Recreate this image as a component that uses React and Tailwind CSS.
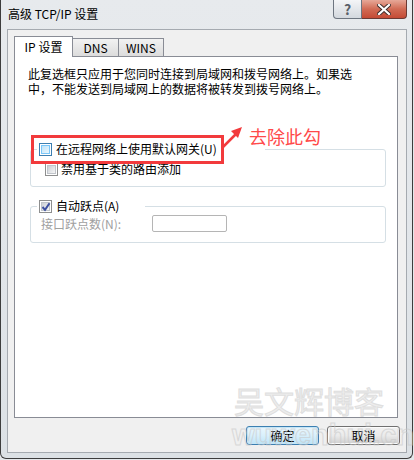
import React from "react";

const FONT = { fontFamily: '"Noto Sans CJK SC", "Liberation Sans", sans-serif' };

const CheckBox = ({ checked = false, hot = false, disabled = false }) => {
    const outer = hot ? "border-[#3c7fb1]" : "border-[#8e8f8f]";
    const inner = hot
        ? "from-[#bfe3f7] to-[#e9f6fd] border-[#79c6f9]"
        : "from-[#cbcfd5] to-[#f6f6f6] border-[#c0c4ca]";
    return (
        <span className={`relative inline-flex w-[13px] h-[13px] shrink-0 border ${outer} bg-white p-[1px]`}>
            <span className={`flex-1 border bg-gradient-to-br ${inner} ${disabled ? "opacity-60" : ""}`} />
            {checked && (
                <svg className="absolute left-[1px] top-[1px]" width="10" height="10" viewBox="0 0 10 10">
                    <path d="M1.5 5 L4 7.8 L8.5 1.2" fill="none" stroke="#3c4fa0" strokeWidth="2" />
                </svg>
            )}
        </span>
    );
};

const Tab = ({ label, selected, w }) => (
    <div
        className={`flex items-center justify-center border border-[#898c95] border-b-0 text-[12px] text-black ${
            selected
                ? "h-[21px] bg-white relative z-10 -mb-px"
                : "h-[18px] bg-gradient-to-b from-[#f2f2f2] to-[#dcdcdc] -ml-px"
        }`}
        style={{ width: w }}
    >
        {label}
    </div>
);

const Button = ({ children, primary }) => (
    <button
        className={`w-[73px] h-[19px] rounded-[3px] border text-[12px] leading-none text-black flex items-center justify-center ${
            primary
                ? "border-[#3c7fb1] bg-gradient-to-b from-[#eaf6fd] via-[#d9f0fc] to-[#bde4f8] shadow-[inset_0_0_0_1px_#c4e5f6]"
                : "border-[#707070] bg-gradient-to-b from-[#f2f2f2] via-[#ebebeb] to-[#cfcfcf] shadow-[inset_0_0_0_1px_#fcfcfc]"
        }`}
    >
        {children}
    </button>
);

export default function App() {
    return (
        <div className="w-[414px] h-[460px] bg-[#e4e7ea] relative overflow-hidden" style={FONT}>
            <div className="w-[413px] h-[459px] border border-[#3d3d3d] border-t-0 rounded-b-[6px] bg-gradient-to-b from-[#e7eaed] via-[#e2e6ea] to-[#dce1e5] flex flex-col">
                <div className="h-[29px] flex items-start justify-between pl-[7px] pr-[5px]">
                    <span className="mt-[5px] text-[12px] leading-[18px] text-black">高级 TCP/IP 设置</span>
                    <div className="flex">
                        <div className="w-[29px] h-[19px] rounded-bl-[4px] border border-t-0 border-[#6d7580] bg-gradient-to-b from-[#f4f5f7] to-[#d3d8de] flex items-center justify-center text-[14px] font-bold text-[#596069] leading-none">
                            ?
                        </div>
                        <div className="w-[45px] h-[19px] rounded-br-[4px] border border-t-0 border-l-0 border-[#6b3a34] bg-gradient-to-b from-[#e6a898] via-[#d16b55] to-[#c44a35] flex items-center justify-center">
                            <svg width="14" height="11" viewBox="0 0 14 11">
                                <path d="M2 1 L12 10 M12 1 L2 10" stroke="#3a2a28" strokeWidth="4" strokeLinecap="square" />
                                <path d="M2 1 L12 10 M12 1 L2 10" stroke="#ffffff" strokeWidth="2.2" strokeLinecap="square" />
                            </svg>
                        </div>
                    </div>
                </div>

                <div className="ml-[6px] mr-[5px] mb-[5px] flex-1 border border-[#a5aab0] bg-[#f0f0f0] flex flex-col pl-[6px] pr-[8px] pt-[6px]">
                    <div className="flex items-end">
                        <Tab label="IP 设置" selected w={59} />
                        <Tab label="DNS" w={47} />
                        <Tab label="WINS" w={46} />
                    </div>
                    <div className="h-[362px] border border-[#898c95] bg-white pt-[9px]">
                        <p className="pl-[13px] text-[12px] leading-[15px] text-black">
                            此复选框只应用于您同时连接到局域网和拨号网络上。如果选
                            <br />
                            中，不能发送到局域网上的数据将被转发到拨号网络上。
                        </p>

                        <fieldset className="mt-[45px] ml-[15px] w-[356px] border border-[#d5dfe5] rounded-[3px] pb-[10px]">
                            <legend className="ml-[6px] pl-[2px] w-[228px] h-[16px] flex items-center gap-[4px] text-[12px] text-black whitespace-nowrap">
                                <CheckBox hot />
                                <span>在远程网络上使用默认网关(U)</span>
                            </legend>
                            <div className="mt-[5px] pl-[14px] flex items-center gap-[3px] text-[12px] text-black h-[14px]">
                                <CheckBox />
                                <span>禁用基于类的路由添加</span>
                            </div>
                        </fieldset>

                        <fieldset className="mt-[11px] ml-[15px] w-[356px] border border-[#d5dfe5] rounded-[3px] pb-[10px]">
                            <legend className="ml-[6px] pl-[2px] w-[108px] h-[16px] flex items-center gap-[4px] text-[12px] text-black whitespace-nowrap">
                                <CheckBox checked />
                                <span>自动跃点(A)</span>
                            </legend>
                            <div className="mt-[1px] pl-[10px] flex items-center text-[12px] text-[#a0a0a0] h-[17px]">
                                <span className="w-[111px]">接口跃点数(N):</span>
                                <div className="w-[75px] h-[17px] border border-[#b5b5b5] rounded-[2px] bg-white" />
                            </div>
                        </fieldset>
                    </div>
                    <div className="mt-[8px] flex justify-end gap-[8px] -mr-[2px]">
                        <Button primary>确定</Button>
                        <Button>取消</Button>
                    </div>
                </div>
            </div>

            {/* annotation overlay */}
            <div className="absolute left-[31px] top-[135px] w-[193px] h-[29px] border-[3px] border-[#f23a3c] pointer-events-none" />
            <svg className="absolute left-[218px] top-[122px] pointer-events-none" width="28" height="30" viewBox="0 0 28 30">
                <path d="M4 26 L21 9" stroke="#f23a3c" strokeWidth="2.5" />
                <path d="M24 5 L13 9 L20 16 Z" fill="#f23a3c" />
            </svg>
            <span className="absolute left-[249px] top-[124px] text-[18px] leading-[24px] text-[#ff4a4a] pointer-events-none">
                去除此勾
            </span>

            {/* watermark */}
            <span className="absolute left-[234px] top-[381px] text-[30px] leading-[38px] text-[#ececec] [-webkit-text-stroke:1px_#dcdcdc] pointer-events-none opacity-90">
                吴文辉博客
            </span>
            <span
                className="absolute left-[232px] top-[420px] text-[29px] leading-[30px] font-bold text-transparent [-webkit-text-stroke:1px_#c8c8c8] pointer-events-none opacity-60"
                style={{ fontFamily: '"Liberation Sans", sans-serif' }}
            >
                wuwenhui.cn
            </span>
        </div>
    );
}
